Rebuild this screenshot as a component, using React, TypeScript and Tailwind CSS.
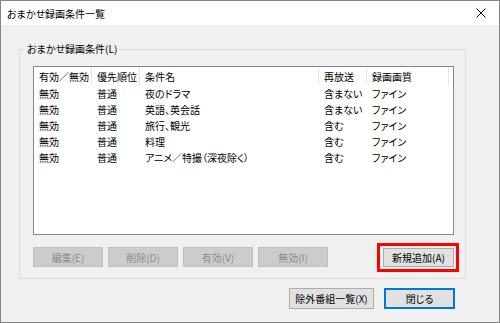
import React from 'react'

const columns = [
  { label: '有効／無効', width: 'w-[58px]' },
  { label: '優先順位', width: 'w-[48px]' },
  { label: '条件名', width: 'w-[179px]' },
  { label: '再放送', width: 'w-[48px]' },
  { label: '録画画質', width: 'w-[82px]' },
]

const rows = [
  ['無効', '普通', '夜のドラマ', '含まない', 'ファイン'],
  ['無効', '普通', '英語、英会話', '含まない', 'ファイン'],
  ['無効', '普通', '旅行、観光', '含む', 'ファイン'],
  ['無効', '普通', '料理', '含む', 'ファイン'],
  ['無効', '普通', 'アニメ／特撮（深夜除く）', '含む', 'ファイン'],
]

const disabledButtons = ['編集(E)', '削除(D)', '有効(V)', '無効(I)']

const App = () => {
  return (
    <div className="w-[500px] h-[323px] flex flex-col border border-[#858585] bg-[#f0f0f0] text-[10px] text-black font-['Noto_Sans_CJK_JP',sans-serif] [font-feature-settings:'palt']">
      {/* Title bar */}
      <div className="h-[24px] flex items-center justify-between bg-white pl-[6px] pr-[8px]">
        <span>おまかせ録画条件一覧</span>
        <svg width="10" height="10" viewBox="0 0 10 10" className="mr-[5px]">
          <path d="M0.5 0.5 L9.5 9.5 M9.5 0.5 L0.5 9.5" stroke="#000" strokeWidth="1" />
        </svg>
      </div>

      {/* Body */}
      <div className="flex-1 flex flex-col pl-[18px]">
        {/* Group box */}
        <div className="relative mt-[24px] w-[447px] border border-[#dcdcdc] pl-[13px] pr-[11px] pt-[16px] pb-[11px]">
          <span className="absolute left-[5px] -top-[8px] px-[2px] leading-[14px] bg-[#f0f0f0]">おまかせ録画条件(L)</span>

          {/* List view */}
          <div className="h-[169px] border border-[#828790] bg-white">
            <div className="flex h-[18px] items-center">
              {columns.map((c) => (
                <div key={c.label} className={`${c.width} h-full flex items-center pl-[5px] border-r border-[#e5e5e5]`}>
                  {c.label}
                </div>
              ))}
            </div>
            {rows.map((r, i) => (
              <div key={i} className="flex h-[16px] items-center">
                {r.map((cell, j) => (
                  <div key={j} className={`${columns[j].width} pl-[5px] whitespace-nowrap`}>
                    {cell}
                  </div>
                ))}
              </div>
            ))}
          </div>

          {/* Buttons */}
          <div className="mt-[12px] flex items-center justify-between">
            <div className="flex gap-[5px]">
              {disabledButtons.map((b) => (
                <div key={b} className="w-[70px] h-[20px] flex items-center justify-center bg-[#cccccc] border border-[#bfbfbf] text-[#8c8c8c]">
                  {b}
                </div>
              ))}
            </div>
            <div className="relative">
              <div className="w-[71px] h-[19px] flex items-center justify-center bg-[#e1e1e1] border border-[#adadad]">
                新規追加(A)
              </div>
              <span className="absolute -left-[6px] -right-[5px] -top-[5px] -bottom-[5px] border-[3px] border-[#ff0000]"></span>
            </div>
          </div>
        </div>

        <div className="mt-[9px] w-[447px] pr-[11px] flex justify-end gap-[10px]">
          <div className="w-[85px] h-[21px] flex items-center justify-center bg-[#e1e1e1] border border-[#adadad]">
            除外番組一覧(X)
          </div>
          <div className="w-[71px] h-[21px] flex items-center justify-center bg-[#e1e1e1] border-2 border-[#0078d7]">
            閉じる
          </div>
        </div>
      </div>
    </div>
  )
}

export default App
